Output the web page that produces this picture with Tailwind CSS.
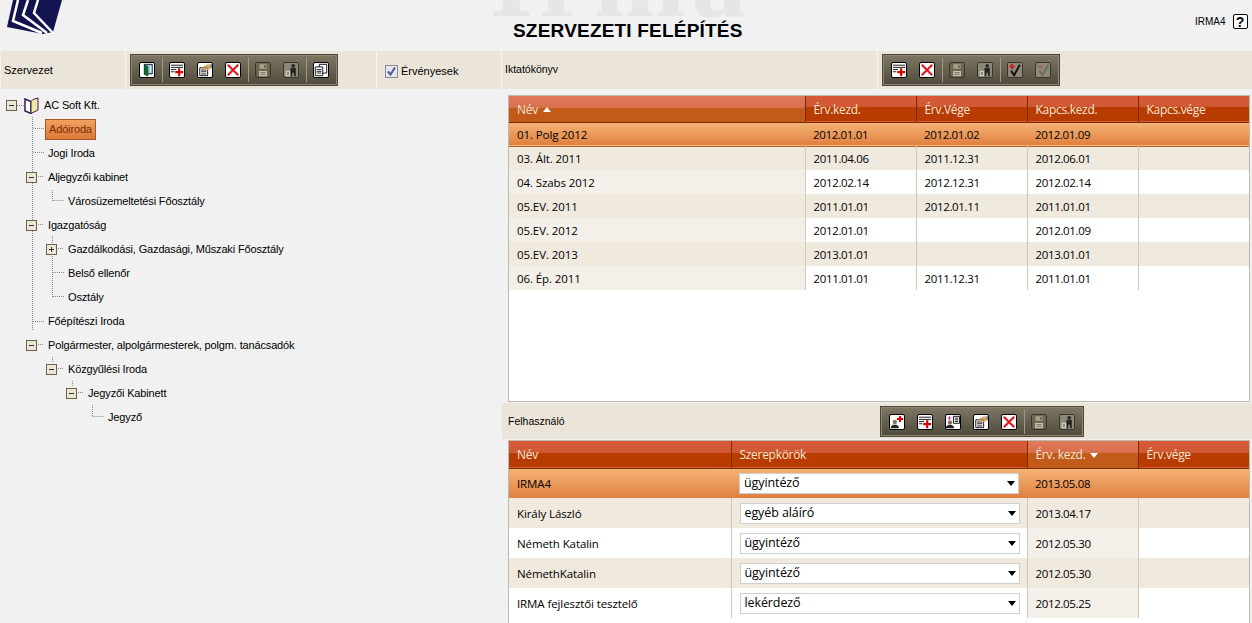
<!DOCTYPE html>
<html lang="en">
<head>
  <meta charset="UTF-8">
  <title>Szervezeti felépítés</title>
  <script src="https://cdn.jsdelivr.net/npm/@tailwindcss/browser@4"></script>
</head>
<body class="bg-[#f1f1f1] h-[623px] w-[1252px] overflow-hidden text-black font-['Liberation_Sans',sans-serif] text-[11px]">

  <svg class="hidden">
    <symbol id="i-door" viewBox="0 0 16 16"><path d="M5 1.500h9v11H5z" fill="#8fbde0" stroke="#111"/><path d="M11 3h2v8h-2z" fill="#d4e6f2"/><path d="M5 2l4 2v11l-4-2z" fill="#0c6b2c" stroke="#063c18" stroke-width=".6"/></symbol>
    <symbol id="i-add" viewBox="0 0 16 16"><path d="M1 2.500h14M1 5h14M1 7.500h6M1 10h4" stroke="#000"/><path d="M10.500 6v9M6 10.500h9" stroke="#e00000" stroke-width="2.500"/></symbol>
    <symbol id="i-edit" viewBox="0 0 16 16"><path d="M2 5.500h9v9H2z" fill="#fff" stroke="#000"/><path d="M3.500 8h6M3.500 10h6M3.500 12.500h6" stroke="#000"/><path d="M5 5.500l6-4 4 .5v4l-5 2.500z" fill="#d8a860"/><path d="M6 5.500l2-1 1 1 1-1 1 2" fill="none" stroke="#7a5a30" stroke-width=".8"/><path d="M15 1v5" stroke="#3b7fc0" stroke-width="1.500"/></symbol>
    <symbol id="i-del" viewBox="0 0 16 16"><path d="M2 2l12 12M14 2L2 14" stroke="#e8141c" stroke-width="2.400"/></symbol>
    <symbol id="i-save" viewBox="0 0 16 16"><path d="M1 1h14v14H1z" fill="#6e6850"/><path d="M4 1.500h8v5H4z" fill="#a9a28c"/><path d="M9.500 2.500h1.500v3H9.500z" fill="#4a4536"/><path d="M3.500 9h9v6h-9z" fill="#c9c3ae"/><path d="M5 11h6M5 13h6" stroke="#6e6850"/></symbol>
    <symbol id="i-trash" viewBox="0 0 16 16"><circle cx="10.500" cy="3" r="2" fill="#222"/><path d="M7.500 5.500h6V15h-2v-4h-2v4h-2z" fill="#222"/><path d="M2.500 9.500h4v5h-4z" fill="none" stroke="#e8e8e0"/></symbol>
    <symbol id="i-copy" viewBox="0 0 16 16"><path d="M6 1.500h8.500v10H6z" fill="#fff" stroke="#000"/><path d="M1.500 4.500H10v10H1.500z" fill="#fff" stroke="#000"/><path d="M3 7.500h5.500M3 9.500h5.500M3 11.500h5.500" stroke="#000"/></symbol>
    <symbol id="i-checkadd" viewBox="0 0 16 16"><path d="M3.500 9l3.500 5 6.500-12" fill="none" stroke="#111" stroke-width="2.200"/><path d="M4.500 1v6M1.500 4h6" stroke="#d01818" stroke-width="2"/></symbol>
    <symbol id="i-checkdel" viewBox="0 0 16 16"><path d="M4 9l3.500 5 6.500-12" fill="none" stroke="#6e6a5e" stroke-width="2.200"/><path d="M1.500 4h6" stroke="#a85a50" stroke-width="2"/></symbol>
    <symbol id="i-useradd" viewBox="0 0 16 16"><circle cx="5.500" cy="8" r="2.500" fill="#8a7660"/><path d="M1 15v-2l2.500-2h4l2.500 2v2z" fill="#222"/><path d="M11.500 1v7M8 4.500h7" stroke="#e00000" stroke-width="2.400"/></symbol>
    <symbol id="i-userlist" viewBox="0 0 16 16"><circle cx="4.500" cy="8.500" r="2.500" fill="#8a7660"/><path d="M0 15v-2l2.500-1.500h4L9 13v2z" fill="#222"/><path d="M4 1.500v4M2 3.500h4" stroke="#e0109a"/><path d="M8.500 1.500h7v8h-7z" fill="#fff" stroke="#000"/><path d="M10 3.500h4M10 5.500h4M10 7.500h4" stroke="#000"/></symbol>
    <symbol id="i-minus" viewBox="0 0 11 11"><rect x=".5" y=".5" width="10" height="10" fill="#ece6d6" stroke="#6b6148"/><path d="M3 5.500h5" stroke="#333"/></symbol>
    <symbol id="i-plus" viewBox="0 0 11 11"><rect x=".5" y=".5" width="10" height="10" fill="#ece6d6" stroke="#6b6148"/><path d="M3 5.500h5M5.500 3v5" stroke="#333"/></symbol>
    <symbol id="i-caret" viewBox="0 0 8 5"><path d="M0 5l4-5 4 5z" fill="currentColor"/></symbol>
    <symbol id="i-caret-down" viewBox="0 0 8 5"><path d="M0 0l4 5 4-5z" fill="currentColor"/></symbol>
  </svg>

  <!-- header -->
  <header class="relative h-[51px]">
    <svg class="absolute left-0 top-0" width="64" height="36" viewBox="0 0 64 36">
      <path d="M13 0h49l-9 32-10 2L7 27z" fill="#13134f"/>
      <path d="M18 0l-5 21 29 12M28 0l-5 15 24 18M38 0l-4 13 19 20" fill="none" stroke="#fff" stroke-width="2.500"/>
    </svg>
    <div class="absolute left-[490px] top-[-76px] text-[110px] leading-[110px] font-bold text-[#e6e6e6] font-['Liberation_Serif',serif] tracking-[6px]">Irma</div>
    <h1 class="absolute left-[513px] top-[21px] text-[19px] leading-[20px] font-bold tracking-[.2px]">SZERVEZETI FELÉPÍTÉS</h1>
    <div class="absolute left-[1195px] top-[14px] flex items-center gap-[7px] text-[10px]">
      <span>IRMA4</span>
      <span class="w-[15px] h-[15px] bg-white border border-black rounded-[2px] flex items-center justify-center text-[14px] font-bold leading-none">?</span>
    </div>
  </header>

  <!-- top toolbars -->
  <div class="h-[38px] flex bg-[#ebe5d9] text-[11px] ml-[1px]">
    <div class="w-[125px] border-r border-[#f4f4f4] flex items-center pl-[3px]">Szervezet</div>
    <div class="w-[251px] border-r border-[#f4f4f4] flex items-center pl-[4px]">
      <div class="h-[32px] w-[208px] flex items-center pl-[2px] bg-gradient-to-b from-[#7f7765] to-[#4f4a3b] border border-[#4a4536] shadow-[inset_0_0_0_1px_#8f8877]">
        <span class="w-[28px] flex justify-center"><svg class="w-[16px] h-[16px] bg-white border border-black rounded-[2px]"><use href="#i-door"/></svg></span>
        <span class="w-[1px] h-[24px] bg-[#a09a88] ml-[1px]"></span>
        <span class="w-[28px] flex justify-center"><svg class="w-[16px] h-[16px] bg-white border border-black rounded-[2px]"><use href="#i-add"/></svg></span>
        <span class="w-[28px] flex justify-center"><svg class="w-[16px] h-[16px] bg-white border border-black rounded-[2px]"><use href="#i-edit"/></svg></span>
        <span class="w-[28px] flex justify-center"><svg class="w-[16px] h-[16px] bg-white border border-black rounded-[2px]"><use href="#i-del"/></svg></span>
        <span class="w-[1px] h-[24px] bg-[#a09a88] ml-[1px]"></span>
        <span class="w-[28px] flex justify-center"><svg class="w-[16px] h-[16px] border border-[#3a3629] rounded-[2px]"><use href="#i-save"/></svg></span>
        <span class="w-[28px] flex justify-center"><svg class="w-[16px] h-[16px] bg-[#8d8878] border border-[#3a3629] rounded-[2px]"><use href="#i-trash"/></svg></span>
        <span class="w-[1px] h-[24px] bg-[#a09a88] ml-[1px]"></span>
        <span class="w-[28px] flex justify-center"><svg class="w-[16px] h-[16px] bg-white border border-black rounded-[2px]"><use href="#i-copy"/></svg></span>
      </div>
    </div>
    <div class="w-[125px] border-r border-[#f4f4f4] flex items-center pl-[8px] pt-[2px] gap-[3px]">
      <span class="w-[13px] h-[13px] bg-[#e6e6ec] border border-[#8d8d9a] flex items-center justify-center"><svg width="11" height="11" viewBox="0 0 11 11"><path d="M2 5.500l2.500 3 4.500-7" fill="none" stroke="#4a5a9c" stroke-width="2"/></svg></span>
      <span>Érvényesek</span>
    </div>
    <div class="w-[376px] border-r border-[#f4f4f4] flex items-center pl-[3px] text-[10.5px]">Iktatókönyv</div>
    <div class="flex-1 flex items-center pl-[4px]">
      <div class="h-[32px] w-[178px] flex items-center pl-[2px] bg-gradient-to-b from-[#7f7765] to-[#4f4a3b] border border-[#4a4536] shadow-[inset_0_0_0_1px_#8f8877]">
        <span class="w-[28px] flex justify-center"><svg class="w-[16px] h-[16px] bg-white border border-black rounded-[2px]"><use href="#i-add"/></svg></span>
        <span class="w-[28px] flex justify-center"><svg class="w-[16px] h-[16px] bg-white border border-black rounded-[2px]"><use href="#i-del"/></svg></span>
        <span class="w-[1px] h-[24px] bg-[#a09a88] ml-[1px]"></span>
        <span class="w-[28px] flex justify-center"><svg class="w-[16px] h-[16px] border border-[#3a3629] rounded-[2px]"><use href="#i-save"/></svg></span>
        <span class="w-[28px] flex justify-center"><svg class="w-[16px] h-[16px] bg-[#8d8878] border border-[#3a3629] rounded-[2px]"><use href="#i-trash"/></svg></span>
        <span class="w-[1px] h-[24px] bg-[#a09a88] ml-[1px]"></span>
        <span class="w-[28px] flex justify-center"><svg class="w-[16px] h-[16px] bg-[#8d8878] border border-[#3a3629] rounded-[2px]"><use href="#i-checkadd"/></svg></span>
        <span class="w-[28px] flex justify-center"><svg class="w-[16px] h-[16px] bg-[#8d8878] border border-[#3a3629] rounded-[2px]"><use href="#i-checkdel"/></svg></span>
      </div>
    </div>
  </div>

  <main class="flex">
    <!-- tree -->
    <section class="relative w-[508px] h-[534px] pt-[4px] text-[11px] tracking-[-0.15px]">
      <svg class="absolute left-0 top-0 pointer-events-none" width="120" height="340" fill="none" stroke="#8a8a8a" stroke-dasharray="1 1">
        <path d="M17 16.500h7M32.500 28v213M33 39.500h11M33 63.500h11M38 87.500h6M38 135.500h6M33 232.500h11M38 255.500h6"/>
        <path d="M52.500 101v11M52.500 111.500h12M52.500 147v7M58 159.500h6M52.500 167v41M53 183.500h11M53 207.500h11"/>
        <path d="M52.500 268v6M58 279.500h6M72.500 292v6M78 303.500h6M92.500 316v12M92.500 327.500h12"/>
      </svg>
      <div class="relative h-[24px] flex items-center"><svg class="ml-[6px] w-[11px] h-[11px]"><use href="#i-minus"/></svg>
        <svg class="ml-[7px] mr-[4px]" width="16" height="17" viewBox="0 0 16 17"><path d="M1 2l6 2.500v12l-6-2.500z" fill="#fff" stroke="#3a1c50" stroke-width="1.500"/><path d="M7 4.500l2-2 5-1.500v12l-7 3.500z" fill="#f0e7a8" stroke="#3a1c50"/></svg>
        <span>AC Soft Kft.</span></div>
      <div class="relative h-[24px] flex items-center pl-[45px]"><span class="h-[21px] px-[3px] flex items-center text-[#7a2c08] bg-gradient-to-b from-[#f0a060] to-[#dc7a38] border border-[#a8562a]">Adóiroda</span></div>
      <div class="relative h-[24px] flex items-center pl-[48px]">Jogi Iroda</div>
      <div class="relative h-[24px] flex items-center pl-[26px]"><svg class="w-[11px] h-[11px] mr-[11px]"><use href="#i-minus"/></svg>Aljegyzői kabinet</div>
      <div class="relative h-[24px] flex items-center pl-[68px]">Városüzemeltetési Főosztály</div>
      <div class="relative h-[24px] flex items-center pl-[26px]"><svg class="w-[11px] h-[11px] mr-[11px]"><use href="#i-minus"/></svg>Igazgatóság</div>
      <div class="relative h-[24px] flex items-center pl-[46px]"><svg class="w-[11px] h-[11px] mr-[11px]"><use href="#i-plus"/></svg>Gazdálkodási, Gazdasági, Műszaki Főosztály</div>
      <div class="relative h-[24px] flex items-center pl-[68px]">Belső ellenőr</div>
      <div class="relative h-[24px] flex items-center pl-[68px]">Osztály</div>
      <div class="relative h-[24px] flex items-center pl-[48px]">Főépítészi Iroda</div>
      <div class="relative h-[24px] flex items-center pl-[26px]"><svg class="w-[11px] h-[11px] mr-[11px]"><use href="#i-minus"/></svg>Polgármester, alpolgármesterek, polgm. tanácsadók</div>
      <div class="relative h-[24px] flex items-center pl-[46px]"><svg class="w-[11px] h-[11px] mr-[11px]"><use href="#i-minus"/></svg>Közgyűlési Iroda</div>
      <div class="relative h-[24px] flex items-center pl-[66px]"><svg class="w-[11px] h-[11px] mr-[11px]"><use href="#i-minus"/></svg>Jegyzői Kabinett</div>
      <div class="relative h-[24px] flex items-center pl-[108px]">Jegyző</div>
    </section>

    <!-- right side -->
    <section class="w-[744px] font-['Open_Sans',sans-serif] text-[11.5px]">
      <div class="mt-[6px] w-[742px] h-[307px] bg-white border border-[#bdb9ac]">
        <table class="w-full table-fixed border-collapse tracking-[-0.1px] [&_td]:pt-[1px] [&_th]:pt-[2px] [&_th]:text-[12px] [&_th]:tracking-[-0.3px] [&_td+td]:tracking-[-0.35px]">
          <colgroup><col class="w-[296px]"><col class="w-[111px]"><col class="w-[111px]"><col class="w-[111px]"><col></colgroup>
          <thead class="text-[#f6e6d8] text-left">
            <tr class="h-[26px] bg-[linear-gradient(#d9583a_0,#cf5a34_45%,#b83c00_46%,#b83c00_100%)] border-b border-[#7a2c00]">
              <th class="font-normal pl-[8px] border-r border-[#7a2c00] bg-[linear-gradient(#df7a5c_0,#d86f4c_45%,#c25a1a_46%,#c25a1a_100%)]">Név <svg class="inline w-[8px] h-[5px] ml-[2px] align-[2px] text-white"><use href="#i-caret"/></svg></th>
              <th class="font-normal pl-[8px] border-r border-[#7a2c00]">Érv.kezd.</th>
              <th class="font-normal pl-[8px] border-r border-[#7a2c00]">Érv.Vége</th>
              <th class="font-normal pl-[8px] border-r border-[#7a2c00]">Kapcs.kezd.</th>
              <th class="font-normal pl-[8px]">Kapcs.vége</th>
            </tr>
          </thead>
          <tbody>
            <tr class="h-[24px] bg-gradient-to-b from-[#f4b577] to-[#e0803f] border-b border-[#b8602a]">
              <td class="pl-[8px]">01. Polg 2012</td><td class="pl-[8px]">2012.01.01</td><td class="pl-[8px]">2012.01.02</td><td class="pl-[8px]">2012.01.09</td><td></td>
            </tr>
            <tr class="h-[24px] bg-[#f0e9de]">
              <td class="pl-[8px]">03. Ált. 2011</td><td class="pl-[8px] border-l border-[#cfcabd]">2011.04.06</td><td class="pl-[8px] border-l border-[#cfcabd]">2011.12.31</td><td class="pl-[8px] border-l border-[#cfcabd]">2012.06.01</td><td class="border-l border-[#cfcabd]"></td>
            </tr>
            <tr class="h-[24px]">
              <td class="pl-[8px] bg-[#f4f0e9]">04. Szabs 2012</td><td class="pl-[8px] border-l border-[#cfcabd]">2012.02.14</td><td class="pl-[8px] border-l border-[#cfcabd]">2012.12.31</td><td class="pl-[8px] border-l border-[#cfcabd]">2012.02.14</td><td class="border-l border-[#cfcabd]"></td>
            </tr>
            <tr class="h-[24px] bg-[#f0e9de]">
              <td class="pl-[8px]">05.EV. 2011</td><td class="pl-[8px] border-l border-[#cfcabd]">2011.01.01</td><td class="pl-[8px] border-l border-[#cfcabd]">2012.01.11</td><td class="pl-[8px] border-l border-[#cfcabd]">2011.01.01</td><td class="border-l border-[#cfcabd]"></td>
            </tr>
            <tr class="h-[24px]">
              <td class="pl-[8px] bg-[#f4f0e9]">05.EV. 2012</td><td class="pl-[8px] border-l border-[#cfcabd]">2012.01.01</td><td class="pl-[8px] border-l border-[#cfcabd]"></td><td class="pl-[8px] border-l border-[#cfcabd]">2012.01.09</td><td class="border-l border-[#cfcabd]"></td>
            </tr>
            <tr class="h-[24px] bg-[#f0e9de]">
              <td class="pl-[8px]">05.EV. 2013</td><td class="pl-[8px] border-l border-[#cfcabd]">2013.01.01</td><td class="pl-[8px] border-l border-[#cfcabd]"></td><td class="pl-[8px] border-l border-[#cfcabd]">2013.01.01</td><td class="border-l border-[#cfcabd]"></td>
            </tr>
            <tr class="h-[24px]">
              <td class="pl-[8px] bg-[#f4f0e9]">06. Ép. 2011</td><td class="pl-[8px] border-l border-[#cfcabd]">2011.01.01</td><td class="pl-[8px] border-l border-[#cfcabd]">2011.12.31</td><td class="pl-[8px] border-l border-[#cfcabd]">2011.01.01</td><td class="border-l border-[#cfcabd]"></td>
            </tr>
          </tbody>
        </table>
      </div>

      <div class="mt-[1px] h-[36px] ml-[-6px] w-[750px] bg-[#ebe5d9] flex items-center pt-[1px] font-['Liberation_Sans',sans-serif] text-[10.5px]">
        <span class="w-[378px] pl-[6px]">Felhasználó</span>
        <div class="h-[31px] w-[204px] flex items-center pl-[2px] bg-gradient-to-b from-[#7f7765] to-[#4f4a3b] border border-[#4a4536] shadow-[inset_0_0_0_1px_#8f8877]">
          <span class="w-[28px] flex justify-center"><svg class="w-[16px] h-[16px] bg-white border border-black rounded-[2px]"><use href="#i-useradd"/></svg></span>
          <span class="w-[28px] flex justify-center"><svg class="w-[16px] h-[16px] bg-white border border-black rounded-[2px]"><use href="#i-add"/></svg></span>
          <span class="w-[28px] flex justify-center"><svg class="w-[16px] h-[16px] bg-white border border-black rounded-[2px]"><use href="#i-userlist"/></svg></span>
          <span class="w-[28px] flex justify-center"><svg class="w-[16px] h-[16px] bg-white border border-black rounded-[2px]"><use href="#i-edit"/></svg></span>
          <span class="w-[28px] flex justify-center"><svg class="w-[16px] h-[16px] bg-white border border-black rounded-[2px]"><use href="#i-del"/></svg></span>
          <span class="w-[1px] h-[24px] bg-[#a09a88] ml-[1px]"></span>
          <span class="w-[28px] flex justify-center"><svg class="w-[16px] h-[16px] border border-[#3a3629] rounded-[2px]"><use href="#i-save"/></svg></span>
          <span class="w-[28px] flex justify-center"><svg class="w-[16px] h-[16px] bg-[#8d8878] border border-[#3a3629] rounded-[2px]"><use href="#i-trash"/></svg></span>
        </div>
      </div>

      <div class="mt-[1px] w-[742px] h-[190px] bg-white border border-[#bdb9ac]">
        <table class="w-full table-fixed border-collapse tracking-[-0.1px] [&_td]:pt-[1px] [&_th]:pt-[2px] [&_th]:text-[12px] [&_th]:tracking-[-0.3px] [&_td:nth-child(3)]:tracking-[-0.35px]">
          <colgroup><col class="w-[222px]"><col class="w-[296px]"><col class="w-[111px]"><col></colgroup>
          <thead class="text-[#f6e6d8] text-left">
            <tr class="h-[27px] bg-[linear-gradient(#d9583a_0,#cf5a34_45%,#b83c00_46%,#b83c00_100%)] border-b border-[#7a2c00]">
              <th class="font-normal pl-[8px] border-r border-[#7a2c00]">Név</th>
              <th class="font-normal pl-[8px] border-r border-[#7a2c00]">Szerepkörök</th>
              <th class="font-normal pl-[8px] border-r border-[#7a2c00] bg-[linear-gradient(#df7a5c_0,#d86f4c_45%,#c25a1a_46%,#c25a1a_100%)]">Érv. kezd. <svg class="inline w-[8px] h-[5px] ml-[2px] align-[1px] text-white"><use href="#i-caret-down"/></svg></th>
              <th class="font-normal pl-[8px]">Érv.vége</th>
            </tr>
          </thead>
          <tbody>
            <tr class="h-[30px] bg-gradient-to-b from-[#f4b577] to-[#e0803f]">
              <td class="pl-[8px]">IRMA4</td>
              <td class="pl-[8px]"><div class="h-[21px] w-[280px] bg-white border border-[#cfcfcf] pl-[4px] pr-[3px] flex items-center justify-between text-[12.5px]"><span>ügyintéző</span><svg class="w-[8px] h-[5px]"><use href="#i-caret-down"/></svg></div></td>
              <td class="pl-[8px]">2013.05.08</td><td></td>
            </tr>
            <tr class="h-[30px] bg-[#f0e9de]">
              <td class="pl-[8px]">Király László</td>
              <td class="pl-[8px] border-l border-[#cfcabd]"><div class="h-[21px] w-[280px] bg-white border border-[#cfcfcf] pl-[4px] pr-[3px] flex items-center justify-between text-[12.5px]"><span>egyéb aláíró</span><svg class="w-[8px] h-[5px]"><use href="#i-caret-down"/></svg></div></td>
              <td class="pl-[8px] border-l border-[#cfcabd]">2013.04.17</td><td class="border-l border-[#cfcabd]"></td>
            </tr>
            <tr class="h-[30px]">
              <td class="pl-[8px]">Németh Katalin</td>
              <td class="pl-[8px] border-l border-[#cfcabd]"><div class="h-[21px] w-[280px] bg-white border border-[#cfcfcf] pl-[4px] pr-[3px] flex items-center justify-between text-[12.5px]"><span>ügyintéző</span><svg class="w-[8px] h-[5px]"><use href="#i-caret-down"/></svg></div></td>
              <td class="pl-[8px] border-l border-[#cfcabd] bg-[#f4f0e9]">2012.05.30</td><td class="border-l border-[#cfcabd]"></td>
            </tr>
            <tr class="h-[30px] bg-[#f0e9de]">
              <td class="pl-[8px]">NémethKatalin</td>
              <td class="pl-[8px] border-l border-[#cfcabd]"><div class="h-[21px] w-[280px] bg-white border border-[#cfcfcf] pl-[4px] pr-[3px] flex items-center justify-between text-[12.5px]"><span>ügyintéző</span><svg class="w-[8px] h-[5px]"><use href="#i-caret-down"/></svg></div></td>
              <td class="pl-[8px] border-l border-[#cfcabd]">2012.05.30</td><td class="border-l border-[#cfcabd]"></td>
            </tr>
            <tr class="h-[30px]">
              <td class="pl-[8px]">IRMA fejlesztői tesztelő</td>
              <td class="pl-[8px] border-l border-[#cfcabd]"><div class="h-[21px] w-[280px] bg-white border border-[#cfcfcf] pl-[4px] pr-[3px] flex items-center justify-between text-[12.5px]"><span>lekérdező</span><svg class="w-[8px] h-[5px]"><use href="#i-caret-down"/></svg></div></td>
              <td class="pl-[8px] border-l border-[#cfcabd] bg-[#f4f0e9]">2012.05.25</td><td class="border-l border-[#cfcabd]"></td>
            </tr>
          </tbody>
        </table>
      </div>
    </section>
  </main>
</body>
</html>
